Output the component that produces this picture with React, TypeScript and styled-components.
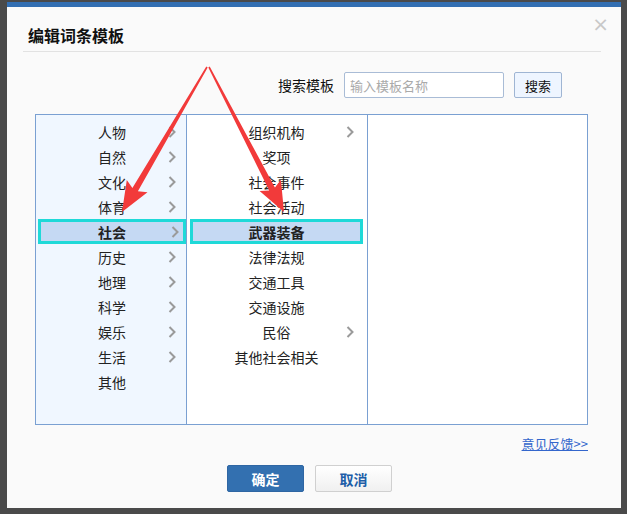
import styled, { createGlobalStyle } from "styled-components";

const GlobalStyle = createGlobalStyle`
  html, body {
    margin: 0;
    padding: 0;
    background: #4a4a4a;
    font-family: "Noto Sans CJK SC", "Liberation Sans", sans-serif;
  }
`;

const Page = styled.div`
  position: relative;
  width: 627px;
  height: 514px;
  padding: 2px 0 0 7px;
  box-sizing: border-box;
  overflow: hidden;
`;

const Dialog = styled.div`
  width: 614px;
  height: 501px;
  background: #fafafa;
  border-top: 5px solid #336fb2;
  display: flex;
  flex-direction: column;
  color: #222;
`;

const Header = styled.div`
  display: flex;
  justify-content: space-between;
  align-items: flex-start;
  height: 45px;
  margin: 0 20px 0 16px;
  border-bottom: 1px solid #e2e2e2;
  box-sizing: border-box;
`;

const Title = styled.h1`
  margin: 18px 0 0 5px;
  font-size: 16px;
  font-weight: bold;
  line-height: 20px;
  color: #111;
`;

const Close = styled.span`
  margin: 9px -8px 0 0;
  font-size: 20px;
  line-height: 16px;
  color: #c8c8c8;
  font-family: "DejaVu Sans", sans-serif;
`;

const SearchRow = styled.div`
  display: flex;
  justify-content: flex-end;
  align-items: center;
  gap: 10px;
  margin: 20px 59px 0 0;
  height: 26px;
`;

const Label = styled.span`
  font-size: 14px;
  color: #111;
`;

const Input = styled.input`
  width: 160px;
  height: 26px;
  box-sizing: border-box;
  border: 1px solid #a9bcd6;
  border-radius: 2px;
  padding: 0 5px;
  font-size: 13px;
  font-family: inherit;
  background: #fff;
  &::placeholder {
    color: #aaa;
  }
`;

const SearchButton = styled.button`
  width: 48px;
  height: 26px;
  box-sizing: border-box;
  border: 1px solid #9fb5d3;
  border-radius: 2px;
  background: #eef5ff;
  font-size: 13px;
  font-family: inherit;
  color: #111;
  padding: 0;
`;

const Panel = styled.div`
  display: flex;
  margin: 16px 0 0 28px;
  width: 553px;
  height: 311px;
  box-sizing: border-box;
  border: 1px solid #7aa0d2;
`;

const Column = styled.div<{ $w: number; $bg: string; $last?: boolean }>`
  width: ${(p) => p.$w}px;
  background: ${(p) => p.$bg};
  border-right: ${(p) => (p.$last ? "none" : "1px solid #7aa0d2")};
  padding-top: 4px;
  box-sizing: border-box;
`;

const Row = styled.div<{ $active?: boolean; $inset: string }>`
  position: relative;
  height: 25px;
  display: flex;
  align-items: center;
  justify-content: center;
  margin: ${(p) => p.$inset};
  box-sizing: border-box;
  font-size: 14px;
  color: #222;
  font-weight: ${(p) => (p.$active ? "bold" : "normal")};
  background: ${(p) => (p.$active ? "#c5d9f3" : "transparent")};
  border: 3px solid ${(p) => (p.$active ? "#1fd9d8" : "transparent")};
`;

const Chevron = styled.svg<{ $right: number }>`
  position: absolute;
  right: ${(p) => p.$right}px;
  top: 50%;
  margin-top: -6px;
`;

const LinkRow = styled.div`
  display: flex;
  justify-content: flex-end;
  width: 581px;
  margin-top: 10px;
`;

const Feedback = styled.a`
  font-size: 13px;
  color: #3366cc;
  text-decoration: underline;
  line-height: 18px;
`;

const Buttons = styled.div`
  display: flex;
  justify-content: center;
  gap: 11px;
  margin-top: 12px;
  padding-right: 9px;
`;

const Btn = styled.button<{ $primary?: boolean }>`
  width: 77px;
  height: 27px;
  box-sizing: border-box;
  border-radius: 2px;
  font-size: 14px;
  font-weight: bold;
  font-family: inherit;
  padding: 0;
  color: ${(p) => (p.$primary ? "#fff" : "#1d5ea8")};
  background: ${(p) =>
    p.$primary ? "#3370b0" : "linear-gradient(#ffffff, #f0f0f0)"};
  border: 1px solid ${(p) => (p.$primary ? "#2f66a3" : "#d0d0d0")};
`;

const Overlay = styled.svg`
  position: absolute;
  left: 0;
  top: 0;
  pointer-events: none;
`;

const left = ["人物", "自然", "文化", "体育", "社会", "历史", "地理", "科学", "娱乐", "生活", "其他"];
const mid = ["组织机构", "奖项", "社会事件", "社会活动", "武器装备", "法律法规", "交通工具", "交通设施", "民俗", "其他社会相关"];
const midArrow = ["组织机构", "民俗"];

function Arrow({ x1, y1, x2, y2 }: { x1: number; y1: number; x2: number; y2: number }) {
  const dx = x2 - x1;
  const dy = y2 - y1;
  const len = Math.hypot(dx, dy);
  const ux = dx / len;
  const uy = dy / len;
  const nx = -uy;
  const ny = ux;
  const head = 30;
  const bx = x2 - ux * head;
  const by = y2 - uy * head;
  const pt = (x: number, y: number) => `${x.toFixed(1)},${y.toFixed(1)}`;
  const pts = [
    pt(x1 + nx * 0.8, y1 + ny * 0.8),
    pt(bx + ux * 4 + nx * 3.2, by + uy * 4 + ny * 3.2),
    pt(bx + nx * 12, by + ny * 12),
    pt(x2, y2),
    pt(bx - nx * 12, by - ny * 12),
    pt(bx + ux * 4 - nx * 3.2, by + uy * 4 - ny * 3.2),
    pt(x1 - nx * 0.8, y1 - ny * 0.8),
  ];
  return <polygon points={pts.join(" ")} fill="#f23a3a" />;
}

function Chev({ right }: { right: number }) {
  return (
    <Chevron $right={right} width="8" height="12" viewBox="0 0 8 12">
      <path d="M1.5 1 L6.5 6 L1.5 11" fill="none" stroke="#9a9a9a" strokeWidth="2" />
    </Chevron>
  );
}

export default function App() {
  return (
    <Page>
      <GlobalStyle />
      <Dialog>
        <Header>
          <Title>编辑词条模板</Title>
          <Close>×</Close>
        </Header>
        <SearchRow>
          <Label>搜索模板</Label>
          <Input placeholder="输入模板名称" />
          <SearchButton>搜索</SearchButton>
        </SearchRow>
        <Panel>
          <Column $w={151} $bg="#f0f7ff">
            {left.map((t) => (
              <Row key={t} $inset="0 0 0 2px" $active={t === "社会"}>
                {t}
                {t !== "其他" && <Chev right={t === "社会" ? 4 : 7} />}
              </Row>
            ))}
          </Column>
          <Column $w={181} $bg="#fff">
            {mid.map((t) => (
              <Row key={t} $inset="0 4px 0 3px" $active={t === "武器装备"}>
                {t}
                {midArrow.includes(t) && <Chev right={6} />}
              </Row>
            ))}
          </Column>
          <Column $w={219} $bg="#fff" $last />
        </Panel>
        <LinkRow>
          <Feedback>意见反馈&gt;&gt;</Feedback>
        </LinkRow>
        <Buttons>
          <Btn $primary>确定</Btn>
          <Btn>取消</Btn>
        </Buttons>
      </Dialog>
      <Overlay width="627" height="514" viewBox="0 0 627 514">
        <Arrow x1={207} y1={67} x2={122} y2={212} />
        <Arrow x1={209} y1={67} x2={284} y2={212} />
      </Overlay>
    </Page>
  );
}
